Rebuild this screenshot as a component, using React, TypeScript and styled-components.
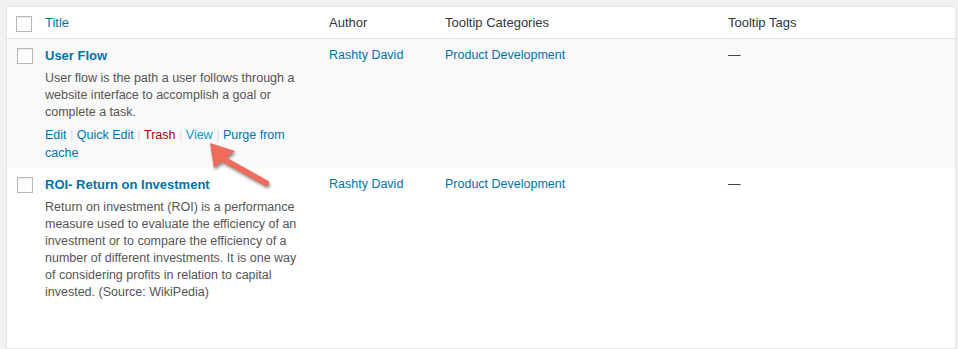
import styled, { createGlobalStyle } from "styled-components";

const Global = createGlobalStyle`
  html, body {
    margin: 0;
    padding: 0;
    background: #f1f1f1;
  }
  body {
    font-family: "Liberation Sans", Arial, sans-serif;
    color: #555;
  }
`;

const Page = styled.div`
  padding: 6px 2px 0 6px;
  height: 349px;
  box-sizing: border-box;
  overflow: hidden;
`;

const Table = styled.div`
  position: relative;
  background: #fff;
  border: 1px solid #e5e5e5;
  box-shadow: 0 1px 1px rgba(0, 0, 0, 0.04);
`;

const cols = "30px 284px 116px 283px 1fr";

const HeadRow = styled.div`
  display: grid;
  grid-template-columns: ${cols};
  border-bottom: 1px solid #e1e1e1;
  height: 31px;
`;

const Row = styled.div<{ $alt?: boolean }>`
  display: grid;
  grid-template-columns: ${cols};
  background: ${(p) => (p.$alt ? "#f9f9f9" : "#fff")};
`;

const CheckCell = styled.div<{ $head?: boolean }>`
  padding: ${(p) => (p.$head ? "9px 0 0 9px" : "9px 0 0 10px")};
`;

const Box = styled.span`
  display: block;
  width: 14px;
  height: 14px;
  border: 1px solid #b4b9be;
  background: #fff;
  box-shadow: inset 0 1px 2px rgba(0, 0, 0, 0.07);
`;

const HeadCell = styled.div<{ $link?: boolean }>`
  padding: 7px 8px;
  font-size: 13px;
  line-height: 17px;
  color: ${(p) => (p.$link ? "#0073aa" : "#32373c")};
`;

const Cell = styled.div`
  padding: 8px 14px 6px 8px;
  font-size: 12.5px;
  line-height: 17px;
`;

const RowTitle = styled.a`
  display: block;
  font-size: 13px;
  font-weight: bold;
  color: #0073aa;
  text-decoration: none;
`;

const Desc = styled.p`
  margin: 6px 0 0;
  color: #555;
`;

const Actions = styled.div<{ $hidden?: boolean }>`
  margin-top: 5px;
  line-height: 18px;
  visibility: ${(p) => (p.$hidden ? "hidden" : "visible")};
`;

const Action = styled.a<{ $tone?: "trash" | "view" }>`
  color: ${(p) =>
    p.$tone === "trash" ? "#a00" : p.$tone === "view" ? "#00a0d2" : "#0073aa"};
  text-decoration: none;
`;

const Sep = styled.span`
  color: #ddd;
  margin: 0 3.5px;
`;

const Link = styled.a`
  color: #0073aa;
  text-decoration: none;
`;

const Dash = styled.span`
  color: #444;
`;

const Arrow = styled.svg`
  position: absolute;
  left: 186px;
  top: 126px;
  overflow: visible;
  filter: drop-shadow(1px 2px 1.5px rgba(0, 0, 0, 0.45));
`;

type Item = {
  title: string;
  desc: string;
  alt?: boolean;
  showActions?: boolean;
};

const items: Item[] = [
  {
    title: "User Flow",
    desc: "User flow is the path a user follows through a website interface to accomplish a goal or complete a task.",
    alt: true,
    showActions: true,
  },
  {
    title: "ROI- Return on Investment",
    desc: "Return on investment (ROI) is a performance measure used to evaluate the efficiency of an investment or to compare the efficiency of a number of different investments. It is one way of considering profits in relation to capital invested. (Source: WikiPedia)",
  },
];

function RowActions({ hidden }: { hidden?: boolean }) {
  return (
    <Actions $hidden={hidden}>
      <Action href="#">Edit</Action>
      <Sep>|</Sep>
      <Action href="#">Quick Edit</Action>
      <Sep>|</Sep>
      <Action $tone="trash" href="#">Trash</Action>
      <Sep>|</Sep>
      <Action $tone="view" href="#">View</Action>
      <Sep>|</Sep>
      <Action href="#">Purge from</Action> <Action href="#">cache</Action>
    </Actions>
  );
}

export default function App() {
  return (
    <>
      <Global />
      <Page>
        <Table>
          <HeadRow>
            <CheckCell $head>
              <Box />
            </CheckCell>
            <HeadCell $link>Title</HeadCell>
            <HeadCell>Author</HeadCell>
            <HeadCell>Tooltip Categories</HeadCell>
            <HeadCell>Tooltip Tags</HeadCell>
          </HeadRow>
          {items.map((it) => (
            <Row key={it.title} $alt={it.alt}>
              <CheckCell>
                <Box />
              </CheckCell>
              <Cell>
                <RowTitle href="#">{it.title}</RowTitle>
                <Desc>{it.desc}</Desc>
                <RowActions hidden={!it.showActions} />
              </Cell>
              <Cell>
                <Link href="#">Rashty David</Link>
              </Cell>
              <Cell>
                <Link href="#">Product Development</Link>
              </Cell>
              <Cell>
                <Dash>—</Dash>
              </Cell>
            </Row>
          ))}
          <Arrow width="80" height="56" viewBox="0 0 80 56">
            <line x1="30" y1="26" x2="73" y2="50" stroke="#ef6b5b" strokeWidth="6" strokeLinecap="round" />
            <polygon points="17,10 21,35 42,18" fill="#ef6b5b" />
          </Arrow>
        </Table>
      </Page>
    </>
  );
}
